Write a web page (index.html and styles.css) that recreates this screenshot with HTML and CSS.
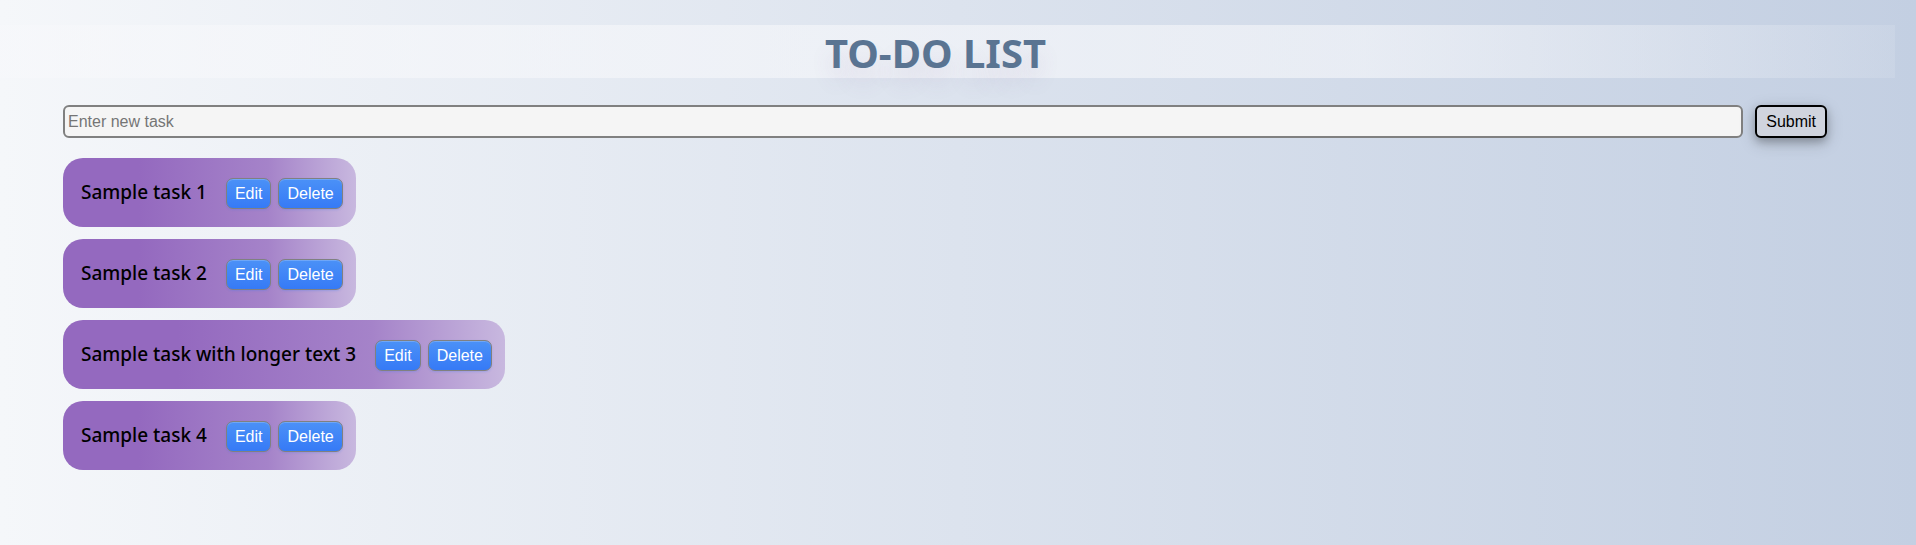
FILE: index.html
```html
<!DOCTYPE html>
<html lang="en">
<head>
<meta charset="utf-8">
<meta name="viewport" content="width=device-width, initial-scale=1">
<title>To-Do List</title>
<link rel="stylesheet" href="styles.css">
</head>
<body>
<header class="header"><h1 class="title">TO-DO LIST</h1></header>
<main class="content">
  <form class="task-form">
    <input class="task-input" type="text" placeholder="Enter new task" aria-label="Enter new task">
    <button class="submit" type="button">Submit</button>
  </form>
  <ul class="tasks">
    <li class="task"><span class="task-name">Sample task 1</span><button class="action" type="button">Edit</button><button class="action" type="button">Delete</button></li>
    <li class="task"><span class="task-name">Sample task 2</span><button class="action" type="button">Edit</button><button class="action" type="button">Delete</button></li>
    <li class="task"><span class="task-name">Sample task with longer text 3</span><button class="action" type="button">Edit</button><button class="action" type="button">Delete</button></li>
    <li class="task"><span class="task-name">Sample task 4</span><button class="action" type="button">Edit</button><button class="action" type="button">Delete</button></li>
  </ul>
</main>
</body>
</html>
```
FILE: styles.css
```css
* {
  box-sizing: border-box;
}

body {
  margin: 0;
  min-height: 100vh;
  padding: 25px 21px 0 0;
  font-family: "Segoe UI", "Noto Sans", "Open Sans", sans-serif;
  background: linear-gradient(to right, #f5f7fa, #c3cfe2);
}

.header {
  padding: 2px 24px 0 0;
  background: linear-gradient(to right, rgba(247, 248, 251, 0.6), rgba(247, 248, 251, 0.6) 72%, rgba(247, 248, 251, 0.12));
}

.title {
  margin: 0;
  font-size: 40px;
  line-height: 51px;
  font-weight: 700;
  text-align: center;
  color: #5a7492;
  text-shadow: 0 16px 20px rgba(120, 80, 140, 0.12);
}

.content {
  padding: 27px 68px 0 63px;
}

.task-form {
  display: flex;
  gap: 12px;
}

.task-input,
.submit {
  height: 33px;
  border: 2px solid #808080;
  border-radius: 6px;
  font-family: "Liberation Sans", Arial, sans-serif;
  font-size: 16px;
}

.task-input {
  flex: 1;
  min-width: 0;
  padding: 1px 3px;
  background: #f5f5f5;
}

.task-input::placeholder {
  color: #757575;
}

.submit {
  padding: 1px 9px;
  border-color: #000;
  background: #d0d4de;
  color: #000;
  box-shadow: 0 4px 8px rgba(0, 0, 0, 0.24), 0 5px 18px rgba(0, 0, 0, 0.16);
}

.tasks {
  display: flex;
  flex-direction: column;
  align-items: flex-start;
  gap: 12px;
  margin: 20px 0 0;
  padding: 0;
  list-style: none;
}

.task {
  display: flex;
  align-items: center;
  gap: 7px;
  height: 69px;
  padding: 2px 13px 0 18px;
  border-radius: 20px;
  background: linear-gradient(to right, #9469bf 0%, #9469bf 26%, #a583c9 70%, #c8b8df 100%);
}

.task-name {
  margin: 0 12px 4px 0;
  font-size: 19px;
  font-weight: 500;
  line-height: 26px;
  color: #000;
}

.action {
  height: 31px;
  padding: 0 8px;
  border: 1px solid #808080;
  border-radius: 7px;
  background: linear-gradient(#4b91f7, #367af6);
  box-shadow: inset 0 1px 0 rgba(255, 255, 255, 0.2), 0 1px 2px rgba(54, 122, 246, 0.25);
  color: #fff;
  font-family: "Liberation Sans", Arial, sans-serif;
  font-size: 16px;
}
```
